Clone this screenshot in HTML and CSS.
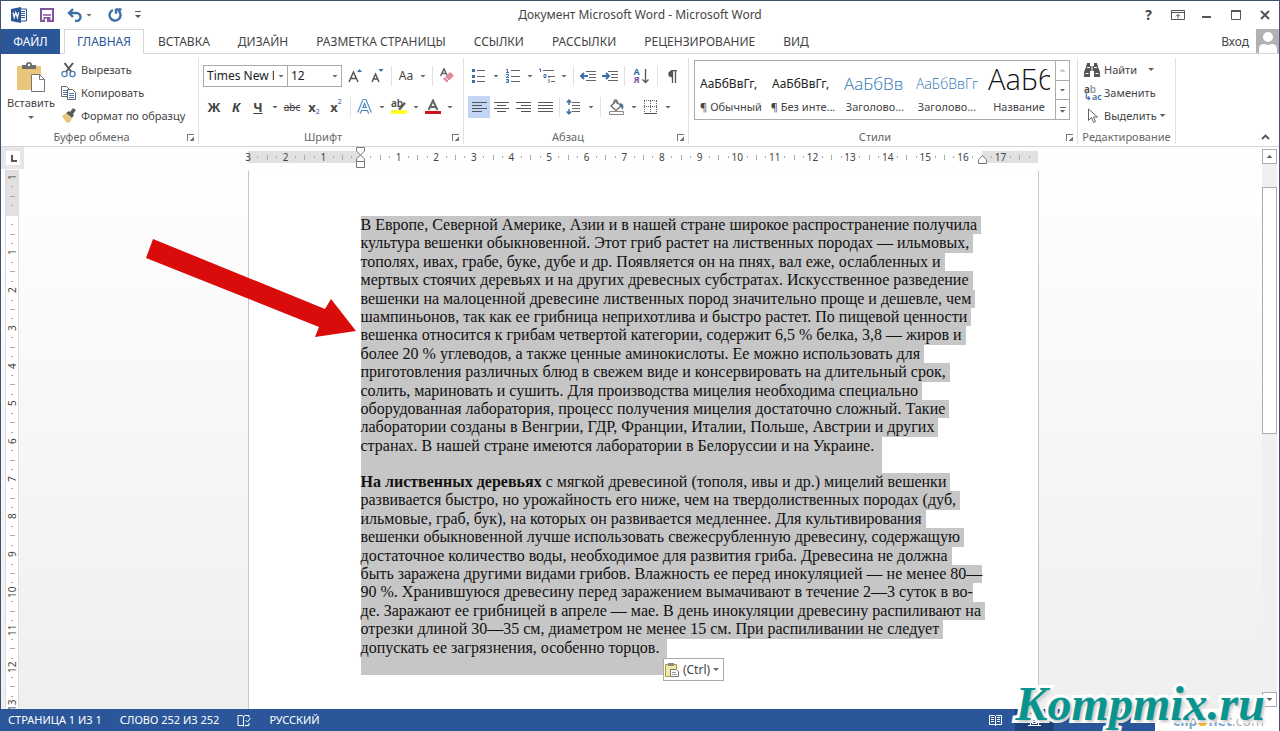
FILE: index.html
```
<!DOCTYPE html>
<html lang="ru">
<head>
    <meta charset="UTF-8">
    <meta name="viewport" content="width=device-width, initial-scale=1.0">
    <title>Документ Microsoft Word</title>
    <link rel="stylesheet" href="styles.css">
</head>
<body>
<div class="app">
    <header class="titlebar">
        <div class="quick">
            <svg class="logo" width="16" height="16" viewBox="0 0 16 16"><path d="M9 2h6.500v12H9z" fill="#fff" stroke="#2b579a"/><path d="M10 4.500h4M10 6.500h4M10 8.500h4M10 10.500h4" stroke="#2b579a"/><path d="M0 2l10-2v16L0 14z" fill="#2b579a"/><path d="M2 5.500l1.200 5 1.600-5 1.600 5 1.300-5" fill="none" stroke="#fff" stroke-width="1.200"/></svg>
            <button aria-label="Сохранить"><svg width="14" height="14" viewBox="0 0 14 14"><path d="M1 1h12v12H1z" fill="#fff" stroke="#80569b" stroke-width="2"/><path d="M3 7h8" stroke="#80569b" stroke-width="1.500"/><path d="M3.500 9h7v5h-7z" fill="#80569b"/><path d="M5 10.500h2V14H5z" fill="#fff"/></svg></button>
            <button class="undo" aria-label="Отменить"><svg width="16" height="14" viewBox="0 0 16 14"><path d="M2 5h7.500a4 4 0 0 1 0 8H8M6 1L2 5l4 4" fill="none" stroke="#3f6fa8" stroke-width="2.400"/></svg><i class="caret"></i></button>
            <button aria-label="Повторить"><svg width="14" height="14" viewBox="0 0 14 14"><path d="M5 2a5.500 5.500 0 1 0 5.500.8M8 .8v5M13.500 1.500H8" fill="none" stroke="#3f6fa8" stroke-width="2.400"/></svg></button>
            <button aria-label="Настройка панели"><svg width="6" height="8" viewBox="0 0 6 8"><path d="M0 .5h6" stroke="#555"/><path d="M0 4h6L3 7z" fill="#555"/></svg></button>
        </div>
        <h1>Документ Microsoft Word - Microsoft Word</h1>
        <div class="winbtns">
            <button aria-label="Справка"><b>?</b></button>
            <button aria-label="Параметры ленты"><svg width="14" height="10" viewBox="0 0 14 10"><path d="M.5.5h13v9H.5zM.5 2.500h13M7 8.500v-4M5 6.300l2-2 2 2" fill="none" stroke="#555"/></svg></button>
            <button aria-label="Свернуть"><svg width="10" height="10" viewBox="0 0 10 10"><path d="M0 7h9" stroke="#555" stroke-width="2"/></svg></button>
            <button aria-label="Развернуть"><svg width="10" height="10" viewBox="0 0 10 10"><path d="M.5.5h9v9h-9z" fill="none" stroke="#555"/><path d="M0 1h10" stroke="#555" stroke-width="2"/></svg></button>
            <button aria-label="Закрыть"><svg width="10" height="10" viewBox="0 0 10 10"><path d="M1 1l8 8M9 1L1 9" stroke="#555" stroke-width="2"/></svg></button>
        </div>
    </header>

    <nav class="tabs">
        <button class="file">ФАЙЛ</button>
        <button class="active">ГЛАВНАЯ</button>
        <button>ВСТАВКА</button>
        <button>ДИЗАЙН</button>
        <button>РАЗМЕТКА СТРАНИЦЫ</button>
        <button>ССЫЛКИ</button>
        <button>РАССЫЛКИ</button>
        <button>РЕЦЕНЗИРОВАНИЕ</button>
        <button>ВИД</button>
        <a class="login" href="#">Вход</a>
        <svg class="avatar" width="23" height="24" viewBox="0 0 23 24"><path d="M0 0h23v24H0z" fill="#b1b1b1"/><circle cx="12" cy="8" r="5" fill="#fff"/><path d="M3 24v-4c0-4 3-5 5-5l4 1 4-1c2 0 5 1 5 5v4z" fill="#fff"/></svg>
    </nav>

    <div class="ribbon">
        <section class="group clipboard">
            <div class="tools">
                <button class="paste">
                    <svg width="29" height="31" viewBox="0 0 29 31"><path d="M0 4h24v24H0z" fill="#eac57c"/><path d="M5 7V3h4a3 3 0 0 1 6 0h4v4z" fill="#6d6d6d"/><circle cx="12" cy="3" r="1.200" fill="#fff"/><path d="M14.500 12.500h8l5 5v12h-13z" fill="#fff" stroke="#777"/><path d="M22.500 12.500v5h5" fill="none" stroke="#777"/></svg>
                    <span>Вставить</span>
                    <i class="caret"></i>
                </button>
                <div class="stack">
                    <button><svg width="16" height="16" viewBox="0 0 16 16"><path d="M3.500 1l7 9M12 1L5 10" stroke="#555" stroke-width="2"/><circle cx="3.500" cy="12" r="2.600" fill="#fff" stroke="#4f7db3" stroke-width="1.300"/><circle cx="11.500" cy="12" r="2.600" fill="#fff" stroke="#4f7db3" stroke-width="1.300"/></svg>Вырезать</button>
                    <button><svg width="16" height="16" viewBox="0 0 16 16"><path d="M.5 1.500h5l3 3v7h-8z" fill="#fff" stroke="#666"/><path d="M2 5.500h4M2 7.500h4M2 9.500h4" stroke="#4f7db3"/><path d="M6.500 4.500h5l3 3v7h-8z" fill="#fff" stroke="#666"/><path d="M8 8.500h5M8 10.500h5M8 12.500h5" stroke="#4f7db3"/></svg>Копировать</button>
                    <button><svg width="16" height="16" viewBox="0 0 16 16"><path d="M1 8l4-3 6 6-3 4-3-1z" fill="#eac57c"/><path d="M5 5l3-2 1 1 3-4 3 2-3 4 1 1-2 3z" fill="#5c5c5c"/></svg>Формат по образцу</button>
                </div>
            </div>
            <footer>Буфер обмена<i class="launch"></i></footer>
        </section>

        <section class="group font">
            <div class="rows">
                <div class="row">
                    <label class="combo family"><select aria-label="Шрифт"><option>Times New Roman</option></select><i class="caret"></i></label>
                    <label class="combo size"><select aria-label="Размер"><option>12</option></select><i class="caret"></i></label>
                    <button aria-label="Увеличить размер"><svg width="16" height="16" viewBox="0 0 16 16"><path d="M2 14L6.500 4 11 14M3.500 10.500h6" fill="none" stroke="#555" stroke-width="1.500"/><path d="M10 4l2.500-3L15 4z" fill="#3f6fa8"/></svg></button>
                    <button aria-label="Уменьшить размер"><svg width="16" height="16" viewBox="0 0 16 16"><path d="M3 14L6.500 6 10 14M4.500 11h4" fill="none" stroke="#555" stroke-width="1.500"/><path d="M9.500 1l2.500 3 2.500-3z" fill="#3f6fa8"/></svg></button>
                    <i class="sep"></i>
                    <button>Aa</button><i class="caret"></i>
                    <i class="sep"></i>
                    <button aria-label="Очистить формат"><svg width="16" height="16" viewBox="0 0 16 16"><path d="M1.500 8L5 .8 8 7M3 5.500h4" fill="none" stroke="#666" stroke-width="1.500"/><path d="M4 11l7-7 4 3.500-7 7z" fill="#e0879a"/><path d="M6 9l4 4" stroke="#fff"/></svg></button>
                </div>
                <div class="row">
                    <button><b>Ж</b></button>
                    <button><b><em>К</em></b></button>
                    <button><b><u>Ч</u></b></button><i class="caret"></i>
                    <button class="strike"><s>abc</s></button>
                    <button class="idx"><b>x</b><sub>2</sub></button>
                    <button class="idx"><b>x</b><sup>2</sup></button>
                    <i class="sep"></i>
                    <button aria-label="Текстовые эффекты"><svg width="16" height="16" viewBox="0 0 16 16"><path d="M2 14L7 2h1l5 12M4.500 10h6" fill="none" stroke="#4a86c8" stroke-width="4" stroke-linejoin="round"/><path d="M2 14L7 2h1l5 12M4.500 10h6" fill="none" stroke="#fff" stroke-width="1.800"/></svg></button><i class="caret"></i>
                    <button class="mark" aria-label="Цвет выделения"><span>ab</span><svg width="16" height="16" viewBox="0 0 16 16"><path d="M7 10l6-7 2 1.500-6 7z" fill="#666"/><path d="M0 11h16v4H0z" fill="#ffff2b"/></svg></button><i class="caret"></i>
                    <button aria-label="Цвет текста"><svg width="16" height="16" viewBox="0 0 16 16"><path d="M3.500 11L8 1.500 12.500 11M5 8h6" fill="none" stroke="#666" stroke-width="2"/><path d="M0 12h16v3H0z" fill="#c9151e"/></svg></button><i class="caret"></i>
                </div>
            </div>
            <footer>Шрифт<i class="launch"></i></footer>
        </section>

        <section class="group para">
            <div class="rows">
                <div class="row">
                    <button aria-label="Маркеры"><svg width="16" height="16" viewBox="0 0 16 16"><path d="M1 1h3v3H1zM1 7h3v3H1zM1 12h3v3H1z" fill="#3f6fa8"/><path d="M6 2.500h8M6 8.500h8M6 13.500h8" stroke="#666"/></svg></button><i class="caret"></i>
                    <button aria-label="Нумерация"><svg width="16" height="16" viewBox="0 0 16 16"><path d="M1 1.500h1.500v3M1 4.500h3M1 6.500h2.500v1.500L1 9.500h3M1 11.500h2.500v3H1M1.500 13h2" fill="none" stroke="#3f6fa8"/><path d="M6 2.500h9M6 8.500h9M6 13.500h9" stroke="#666"/></svg></button><i class="caret"></i>
                    <button aria-label="Многоуровневый список"><svg width="17" height="16" viewBox="0 0 17 16"><path d="M0 1h1.500v3M5 6.500h2v3H5zM10 11v4M10 9v1" fill="none" stroke="#3f6fa8"/><path d="M4 2.500h11M9 8.500h7M12 13.500h4" stroke="#666"/></svg></button><i class="caret"></i>
                    <i class="sep"></i>
                    <button aria-label="Уменьшить отступ"><svg width="16" height="12" viewBox="0 0 16 12"><path d="M6 1.500h10M9 4.500h7M9 7.500h7M6 10.500h10" stroke="#666"/><path d="M1 6h7M4 3L1 6l3 3" fill="none" stroke="#3f6fa8" stroke-width="2"/></svg></button>
                    <button aria-label="Увеличить отступ"><svg width="16" height="12" viewBox="0 0 16 12"><path d="M6 1.500h10M9 4.500h7M9 7.500h7M6 10.500h10" stroke="#666"/><path d="M0 6h7M4 3l3 3-3 3" fill="none" stroke="#3f6fa8" stroke-width="2"/></svg></button>
                    <i class="sep"></i>
                    <button class="sort" aria-label="Сортировка"><span>А<br><em>Я</em></span><svg width="7" height="15" viewBox="0 0 7 15"><path d="M3.500 0v14M.5 10.500l3 3 3-3" fill="none" stroke="#555" stroke-width="1.300"/></svg></button>
                    <i class="sep"></i>
                    <button aria-label="Знаки абзаца"><svg width="10" height="13" viewBox="0 0 10 13"><path d="M10 .8H4a3.300 3.300 0 0 0 0 6.500h1V1" fill="#555"/><path d="M4 .7h6M5.500 1v12M8.500 1v12" stroke="#555" stroke-width="1.300"/></svg></button>
                </div>
                <div class="row">
                    <button class="on" aria-label="По левому краю"><svg width="15" height="12" viewBox="0 0 15 12"><path d="M0 1.500h15M0 4.500h10M0 7.500h15M0 10.500h10" stroke="#555"/></svg></button>
                    <button aria-label="По центру"><svg width="15" height="12" viewBox="0 0 15 12"><path d="M0 1.500h15M3 4.500h9M0 7.500h15M3 10.500h9" stroke="#555"/></svg></button>
                    <button aria-label="По правому краю"><svg width="15" height="12" viewBox="0 0 15 12"><path d="M0 1.500h15M5 4.500h10M0 7.500h15M5 10.500h10" stroke="#555"/></svg></button>
                    <button aria-label="По ширине"><svg width="15" height="12" viewBox="0 0 15 12"><path d="M0 1.500h15M0 4.500h15M0 7.500h15M0 10.500h15" stroke="#555"/></svg></button>
                    <i class="sep"></i>
                    <button aria-label="Интервал"><svg width="16" height="16" viewBox="0 0 16 16"><path d="M6 3.500h8M6 6.500h8M6 9.500h8M6 12.500h8" stroke="#666"/><path d="M3 1v5M.8 3.500L3 1.200l2.200 2.300M3 10v5M.8 12.500L3 14.800l2.200-2.300" fill="none" stroke="#3f6fa8" stroke-width="1.500"/></svg></button><i class="caret"></i>
                    <i class="sep"></i>
                    <button class="wide" aria-label="Заливка"><svg width="17" height="16" viewBox="0 0 17 16"><path d="M3 7l5-5 5 5-5 4.500z" fill="#fff" stroke="#666" stroke-width="1.300"/><path d="M6 5V1h3v4" fill="none" stroke="#666"/><path d="M12 4c4 1 4 4 2.500 7-1-2-2-4-2.500-7z" fill="#4f6f95"/><path d="M1.500 12.500h14v3h-14z" fill="#fff" stroke="#888"/></svg></button><i class="caret"></i>
                    <button aria-label="Границы"><svg width="14" height="14" viewBox="0 0 14 14"><path d="M0 .5h13M.5 1v12M12.500 1v12M6.500 1v12M0 6.500h13" stroke="#666" stroke-dasharray="1 1"/><path d="M0 13.500h13" stroke="#555"/></svg></button><i class="caret"></i>
                </div>
            </div>
            <footer>Абзац<i class="launch"></i></footer>
        </section>

        <section class="group styles">
            <div class="gallery">
                <button><span class="sample">АаБбВвГг,</span><span>¶ Обычный</span></button>
                <button><span class="sample">АаБбВвГг,</span><span>¶ Без инте...</span></button>
                <button><span class="sample h1">АаБбВв</span><span>Заголово...</span></button>
                <button><span class="sample h2">АаБбВвГг</span><span>Заголово...</span></button>
                <button><span class="sample big">АаБб</span><span>Название</span></button>
                <div class="gscroll">
                    <button class="off" aria-label="Вверх"><i class="caret up"></i></button>
                    <button aria-label="Вниз"><i class="caret"></i></button>
                    <button class="more" aria-label="Все стили"><i class="caret"></i></button>
                </div>
            </div>
            <footer>Стили<i class="launch"></i></footer>
        </section>

        <section class="group edit">
            <div class="stack">
                <button><svg width="16" height="14" viewBox="0 0 16 14"><path d="M3 0h3v3h4V0h3l1 4 2 5v5h-6V8H6v6H0V9l2-5z" fill="#555"/><path d="M1.500 10.500h3M11.500 10.500h3M3 4.500h3M10 4.500h3M8 3v5" stroke="#fff"/></svg>Найти<i class="caret far"></i></button>
                <button><span class="abac"><span>a<i>b</i></span><span class="blue">↳ac</span></span>Заменить</button>
                <button><svg width="16" height="16" viewBox="0 0 16 16"><path d="M4.500 1v11.500l3-3 2 5 2-1-2-4.500h4z" fill="#fff" stroke="#666"/></svg>Выделить<i class="caret"></i></button>
            </div>
            <footer>Редактирование</footer>
        </section>
        <button class="collapse" aria-label="Свернуть ленту"><svg width="9" height="6" viewBox="0 0 9 6"><path d="M1 5l3.500-3.500L8 5" fill="none" stroke="#555" stroke-width="1.800"/></svg></button>
    </div>

    <main class="work">
        <div class="left">
            <div class="corner"><i></i></div>
            <div class="vruler"></div>
        </div>
        <div class="canvas">
            <div class="hruler">
                <svg class="indent" width="9" height="22" viewBox="0 0 9 22"><path d="M.5.5h8V4l-4 4-4-4zM4.500 8l4 4v2.500h-8V12zM.5 14.500h8v6h-8z" fill="#fff" stroke="#777"/></svg>
                <svg class="indent right" width="9" height="9" viewBox="0 0 9 9"><path d="M4.500.7l4 4v3.800h-8V4.700z" fill="#fff" stroke="#777"/></svg>
            </div>
            <article class="page">
                <p><span>В Европе, Северной Америке, Азии и в нашей стране широкое распространение получила </span>
<span>культура вешенки обыкновенной. Этот гриб растет на лиственных породах — ильмовых, </span>
<span>тополях, ивах, грабе, буке, дубе и др. Появляется он на пнях, вал еже, ослабленных и </span>
<span>мертвых стоячих деревьях и на других древесных субстратах. Искусственное разведение </span>
<span>вешенки на малоценной древесине лиственных пород значительно проще и дешевле, чем </span>
<span>шампиньонов, так как ее грибница неприхотлива и быстро растет. По пищевой ценности </span>
<span>вешенка относится к грибам четвертой категории, содержит 6,5 % белка, 3,8 — жиров и </span>
<span>более 20 % углеводов, а также ценные аминокислоты. Ее можно использовать для </span>
<span>приготовления различных блюд в свежем виде и консервировать на длительный срок, </span>
<span>солить, мариновать и сушить. Для производства мицелия необходима специально </span>
<span>оборудованная лаборатория, процесс получения мицелия достаточно сложный. Такие </span>
<span>лаборатории созданы в Венгрии, ГДР, Франции, Италии, Польше, Австрии и других </span>
<span>странах. В нашей стране имеются лаборатории в Белоруссии и на Украине. </span></p>
                <p><span><b>На лиственных деревьях</b> с мягкой древесиной (тополя, ивы и др.) мицелий вешенки </span>
<span>развивается быстро, но урожайность его ниже, чем на твердолиственных породах (дуб, </span>
<span>ильмовые, граб, бук), на которых он развивается медленнее. Для культивирования </span>
<span>вешенки обыкновенной лучше использовать свежесрубленную древесину, содержащую </span>
<span>достаточное количество воды, необходимое для развития гриба. Древесина не должна </span>
<span>быть заражена другими видами грибов. Влажность ее перед инокуляцией — не менее 80—</span>
<span>90 %. Хранившуюся древесину перед заражением вымачивают в течение 2—3 суток в во-</span>
<span>де. Заражают ее грибницей в апреле — мае. В день инокуляции древесину распиливают на </span>
<span>отрезки длиной 30—35 см, диаметром не менее 15 см. При распиливании не следует </span>
<span>допускать ее загрязнения, особенно торцов. </span></p>
                <button class="pastetag"><svg width="16" height="16" viewBox="0 0 16 16"><path d="M1.500 2.500h11v12h-11z" fill="#f3e9a0" stroke="#a89a4a"/><path d="M4 1h6v3H4z" fill="#8a8a8a"/><path d="M6.500 7.500h6l2 2v5h-8z" fill="#fff" stroke="#777"/><path d="M8 10.500h4M8 12.500h5" stroke="#999"/></svg>(Ctrl)<i class="caret"></i></button>
                <svg class="arrow" width="210" height="98" viewBox="0 0 210 98"><path d="M7 0l172 70 6-10 25 32-41 6 4-10L0 19z" fill="#d90b0b"/></svg>
            </article>
        </div>
        <div class="scroll">
            <button aria-label="Вверх"><i class="caret up"></i></button>
            <div class="track"><div class="thumb"></div></div>
            <button aria-label="Вниз"><i class="caret"></i></button>
        </div>
    </main>

    <footer class="status">
        <div class="info">
            <span>СТРАНИЦА 1 ИЗ 1</span>
            <span>СЛОВО 252 ИЗ 252</span>
            <svg width="14" height="13" viewBox="0 0 14 13"><path d="M6.500 11.500H1V1.500h4l1.500 1 1.500-1h4v2M6.500 2.500v10M8 11.500h4V9M8.500 6l2 2 3-4" fill="none" stroke="#fff"/></svg>
            <span>РУССКИЙ</span>
            <div class="views">
                <button aria-label="Режим чтения"><svg width="13" height="12" viewBox="0 0 13 12"><path d="M.5 1.500h5l1 1 1-1h5v9h-5l-1 1-1-1h-5zM6.500 2.500v9M2 3.500h3M2 5.500h3M2 7.500h3M8 3.500h3M8 5.500h3M8 7.500h3" fill="none" stroke="#fff"/></svg></button>
                <button class="on" aria-label="Разметка страницы"><svg width="13" height="12" viewBox="0 0 13 12"><path d="M2.500.5h8v11h-8zM4 3.500h5M4 5.500h5M4 7.500h5M4 9.500h5M0 11.500h13" fill="none" stroke="#fff"/></svg></button>
            </div>
        </div>
        <div class="clip">clip<i></i>net<span>.com</span></div>
    </footer>
    <div class="brand">Kompmix.ru</div>
</div>

<script>
    // one cell per centimetre: label, dot, bar, dot
    function ruler(el, labels) {
        labels.forEach(function (n) {
            const cell = document.createElement("div");
            cell.classList.add("cm");
            cell.innerHTML = `<span>${n}</span><i></i><i class="half"></i><i></i>`;
            el.appendChild(cell);
        });
    }
    const h = [3, 2, 1, ""];
    for (let i = 1; i < 18; i++) h.push(i);
    ruler(document.querySelector(".hruler"), h);

    const v = [1, ""];
    for (let i = 1; i < 14; i++) v.push(i);
    ruler(document.querySelector(".vruler"), v);
</script>
</body>
</html>
```
FILE: styles.css
```
* {box-sizing: border-box;}
body {
    margin: 0;
    font-family: "Noto Sans", "Open Sans", sans-serif;
    font-size: 12px;
    line-height: 16px;
    color: #444;
    overflow: hidden;
}
button {
    border: 0;
    padding: 0;
    background: none;
    font: inherit;
    color: inherit;
    display: flex;
    align-items: center;
    justify-content: center;
    white-space: nowrap;
}
svg {flex: none;}
.app {
    height: 100vh;
    display: flex;
    flex-direction: column;
    position: relative;
    border: 1px solid #3d5371;
    border-bottom: 0;
    background: #fff;
}
.caret {
    flex: none;
    width: 12px;
    height: 3px;
    background: #666;
    clip-path: polygon(3px 0, 9px 0, 6px 100%);
}
.caret.up {clip-path: polygon(3px 100%, 9px 100%, 6px 0);}

/* title bar */
.titlebar {
    height: 28px;
    flex: none;
    display: grid;
    grid-template-columns: 1fr auto 1fr;
    align-items: center;
}
.titlebar h1 {margin: 0; font-size: 12px; font-weight: 400;}
.quick {display: flex; align-items: center; gap: 13px; padding-left: 10px;}
.winbtns {display: flex; justify-content: flex-end;}
.winbtns button {width: 29px; height: 24px; font-size: 14px;}

/* tabs */
.tabs {
    height: 25px;
    flex: none;
    display: flex;
    box-shadow: inset 0 -1px #d5d5d5;
}
.tabs button {padding: 0 14px;}
.tabs .file {background: #2b579a; color: #fff; width: 59px; margin-right: 4px;}
.tabs .active {
    padding: 0 12px;
    color: #2b579a;
    background: #fff;
    border: 1px solid #d5d5d5;
    border-bottom: 0;
}
.login {margin-left: auto; align-self: center; color: #444; text-decoration: none;}
.avatar {margin-left: 7px;}

/* ribbon */
.ribbon {
    height: 93px;
    flex: none;
    display: flex;
    padding: 4px 0 2px;
    border-bottom: 1px solid #d5d5d5;
}
.group {
    display: flex;
    flex-direction: column;
    border-right: 1px solid #e1e1e1;
}
.group footer {
    margin-top: auto;
    height: 14px;
    line-height: 14px;
    padding-right: 16px;
    font-size: 11px;
    color: #666;
    text-align: center;
    position: relative;
}
.launch {
    position: absolute;
    right: 4px;
    bottom: 3px;
    width: 7px;
    height: 7px;
    border: solid #777;
    border-width: 1px 0 0 1px;
    background: linear-gradient(135deg, transparent 60%, #777 60%);
}
.clipboard {width: 198px;}
.font {width: 265px;}
.para {width: 225px;}
.styles {width: 389px;}
.edit {width: 98px;}
.edit footer {padding-right: 0;}
.tools {display: flex;}
.paste {width: 60px; flex-direction: column; justify-content: flex-start; padding-top: 4px; font-size: 11px; height: 69px;}
.paste span {margin: 2px 0 5px;}
.stack button {height: 23px; gap: 4px; font-size: 11px;}
.edit .stack {padding-left: 6px;}
.stack button .caret {margin-left: -4px;}
.stack button .caret.far {margin-left: 4px;}

.rows {display: flex; flex-direction: column; gap: 9px; padding: 7px 0 0 4px;}
.row {display: flex; align-items: center; height: 22px;}
.row button {width: 22px; height: 22px; flex: none;}
.row .sort {width: 26px; gap: 2px;}
.row .wide {width: 24px;}
.row .on {background: #c2d5f2;}
.row b {font-size: 13px;}
.sep {width: 1px; height: 20px; margin: 0 3px; background: #e1e1e1; flex: none;}
.combo {
    display: flex;
    align-items: center;
    height: 22px;
    border: 1px solid #ababab;
    position: relative;
}
.combo.family {width: 85px;}
.combo.size {width: 55px; margin: 0 2px 0 -1px;}
.combo select {
    appearance: none;
    border: 0;
    background: none;
    width: 100%;
    padding: 0 13px 0 3px;
    font: inherit;
    color: #222;
}
.combo .caret {position: absolute; right: 0;}
.row .strike {font-size: 10px;}
.row sub, .row sup {font-size: 7px; line-height: 8px; color: #2b579a;}
.row sub {align-self: flex-end;}
.row sup {align-self: flex-start;}
.idx {padding: 2px 0;}
.mark {position: relative;}
.mark span {position: absolute; top: 0; left: 3px; font-size: 10px; line-height: 14px; font-weight: 600;}
.sort span {font-size: 9px; line-height: 8px; font-weight: 700; color: #3f6fa8;}
.sort em {font-style: normal; color: #80569b;}

.gallery {
    display: flex;
    width: 376px;
    height: 60px;
    margin: 2px 0 0 5px;
    border: 1px solid #ababab;
}
.gallery > button {
    width: 72px;
    flex-direction: column;
    justify-content: flex-end;
    padding: 0 5px 4px;
    font-size: 11px;
}
.sample {
    width: 62px;
    height: 30px;
    line-height: 30px;
    overflow: hidden;
    font-size: 12px;
    color: #222;
    text-align: left;
}
.sample.h1, .sample.h2 {font-family: "Open Sans", sans-serif; font-weight: 300; color: #2e74b5;}
.sample.h1 {font-size: 17px;}
.sample.h2 {font-size: 14px;}
.sample.big {font-family: "Open Sans", sans-serif; font-size: 29px; line-height: 20px; font-weight: 300; color: #111;}
.gscroll {display: flex; flex-direction: column; width: 14px; border-left: 1px solid #ababab;}
.gscroll button {flex: 1; width: 13px;}
.gscroll button + button {border-top: 1px solid #ababab;}
.gscroll .off {opacity: .4;}
.more {flex-direction: column; gap: 2px;}
.more::before {content: ""; width: 6px; height: 1px; background: #666;}
.abac {width: 16px; font-size: 10px; line-height: 8px; font-weight: 600; text-align: left; display: flex; flex-direction: column;}
.abac i {font-style: normal; color: #999;}
.abac .blue {color: #3f6fa8; font-size: 9px;}
.collapse {margin-left: auto; align-self: flex-end; width: 28px; height: 14px;}

/* workspace */
.work {
    flex: 1;
    min-height: 0;
    display: grid;
    grid-template-columns: 23px 1fr 17px;
    background: linear-gradient(#fff, #efefef);
}
.left {display: flex; flex-direction: column; min-height: 0;}
.corner {
    height: 22px;
    width: 23px;
    margin-bottom: 2px;
    padding: 4px 4px 4px 5px;
    background: #e6e6e6;
}
.corner i {display: block; height: 14px; background: linear-gradient(#555, #555) 5px 4px / 2px 7px no-repeat, linear-gradient(#555, #555) 5px 9px / 6px 2px no-repeat, #fff;}
.canvas {display: flex; flex-direction: column; align-items: center; min-width: 0; min-height: 0;}
.hruler {
    width: 790px;
    height: 12px;
    margin: 4px 0 8px;
    display: flex;
    position: relative;
    flex: none;
    background: linear-gradient(90deg, #e1e1e1 113px, #fff 113px 734px, #e1e1e1 734px);
}
.cm {flex: 1; display: grid; grid-template-columns: repeat(4, 1fr); align-items: center; font-size: 10px; line-height: 12px;}
.cm span {width: 0; display: flex; justify-content: center;}
.cm i {width: 1px; height: 2px; background: #aaa;}
.cm .half {height: 5px;}
.indent {position: absolute; left: 108px; top: -4px;}
.indent.right {left: 730px; top: 4px;}
.vruler {
    flex: 1;
    width: 12px;
    margin-left: 5px;
    padding: 6px 0 4px;
    display: flex;
    flex-direction: column;
    overflow: hidden;
    outline: 1px solid #dcdcdc;
    background: linear-gradient(#e1e1e1 45px, #fff 45px);
}
.vruler .cm {grid-template-columns: 12px; grid-template-rows: repeat(4, 1fr); justify-items: center; align-items: start;}
.vruler .cm:last-child {flex: 0 0 0px; height: 0;}
.vruler .cm:last-child i {display: none;}
.vruler span {width: 12px; height: 0; align-items: center; writing-mode: vertical-rl; transform: rotate(180deg);}
.vruler i {width: 2px; height: 1px;}
.vruler .half {width: 5px; height: 1px;}
.page {
    flex: 1;
    min-height: 0;
    width: 791px;
    padding: 45px 0 0 112px;
    border: solid #c6c6c6;
    border-width: 0 1px;
    background: #fff;
    position: relative;
    font-family: "Liberation Serif", serif;
    font-size: 16px;
    line-height: 1.15;
    color: #111;
}
.page p {margin: 0;}
.page p span {
    display: block;
    width: fit-content;
    white-space: pre;
    background: #c6c6c6;
}
.page p span:last-child {padding: 0 4px 18px 0;}
.pastetag {
    position: absolute;
    left: 414px;
    top: 487px;
    width: 61px;
    height: 23px;
    gap: 3px;
    border: 1px solid #ababab;
    background: #fff;
    font-family: "Noto Sans", sans-serif;
    font-size: 12px;
    color: #444;
}
.pastetag .caret {width: 9px; clip-path: polygon(0 0, 6px 0, 3px 100%);}
.arrow {position: absolute; left: -103px; top: 68px;}
.scroll {
    display: flex;
    flex-direction: column;
    padding: 2px 2px 2px 0;
    background: #fff;
}
.scroll button {height: 15px; border: 1px solid #ababab;}
.track {flex: 1; padding-top: 23px; background: #f0f0f0;}
.thumb {height: 49%; background: #fff; border: 1px solid #ababab;}

/* status bar */
.status {height: 22px; flex: none; display: flex; margin: 0 -1px;}
.info {
    flex: 1;
    display: flex;
    align-items: center;
    gap: 18px;
    padding-left: 8px;
    background: #2b579a;
    color: #fff;
    font-size: 11px;
}
.views {display: flex; align-self: stretch; margin-left: auto; padding-right: 101px;}
.views button {width: 39px;}
.views .on {background: #1e4278;}
.clip {
    width: 125px;
    padding: 3px 0 0 18px;
    font-size: 14px;
    line-height: 18px;
    font-weight: 700;
    color: #7fa8cf;
}
.clip i {display: inline-block; width: 11px; height: 11px; border-radius: 50%; background: #f0b429;}
.clip span {font-weight: 400; color: #b5b5b5;}
.brand {
    position: absolute;
    right: 14px;
    bottom: 0;
    font: italic 700 48px/54px "Liberation Serif", serif;
    color: #0a9490;
    -webkit-text-stroke: 6px #fff;
    paint-order: stroke fill;
    text-shadow: 2px 2px 3px rgba(0, 0, 0, .25);
}
```
